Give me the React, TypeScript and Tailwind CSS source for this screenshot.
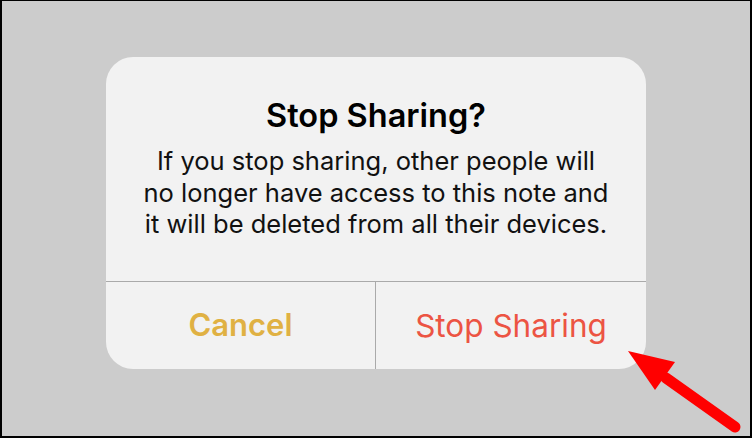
import React from 'react';

const font = { fontFamily: 'Inter, "Noto Sans", sans-serif' };

export default function App() {
  return (
    <div
      className="relative w-[752px] h-[438px] bg-[#cccccc] border-2 border-t border-black flex justify-center pt-[56px]"
      style={font}
    >
      <div className="w-[540px] h-[312px] rounded-[27px] bg-[#f2f2f2] flex flex-col overflow-hidden">
        <div className="h-[224px] flex flex-col items-center pt-[39px] text-black">
          <h1 className="text-[32.5px] leading-[40px] font-semibold">Stop Sharing?</h1>
          <p className="mt-[9px] text-[25.5px] leading-[31.5px] text-center text-[#111]">
            If you stop sharing, other people will
            <br />
            no longer have access to this note and
            <br />
            it will be deleted from all their devices.
          </p>
        </div>
        <div className="flex-1 flex border-t border-[#aaaaaa]">
          <button className="w-[270px] flex items-center justify-center border-r border-[#aaaaaa] text-[31px] font-semibold text-[#e0b143]">
            Cancel
          </button>
          <button className="flex-1 flex items-center justify-center text-[31.5px] text-[#ec5443]">
            Stop Sharing
          </button>
        </div>
      </div>

      {/* annotation arrow */}
      <svg className="absolute left-0 top-0" width="752" height="438" viewBox="0 0 752 438">
        <line x1="664" y1="377" x2="733" y2="426" stroke="#ff0000" strokeWidth="11" strokeLinecap="round" />
        <polygon points="626,350 673,361 653,389" fill="#ff0000" />
      </svg>
    </div>
  );
}
